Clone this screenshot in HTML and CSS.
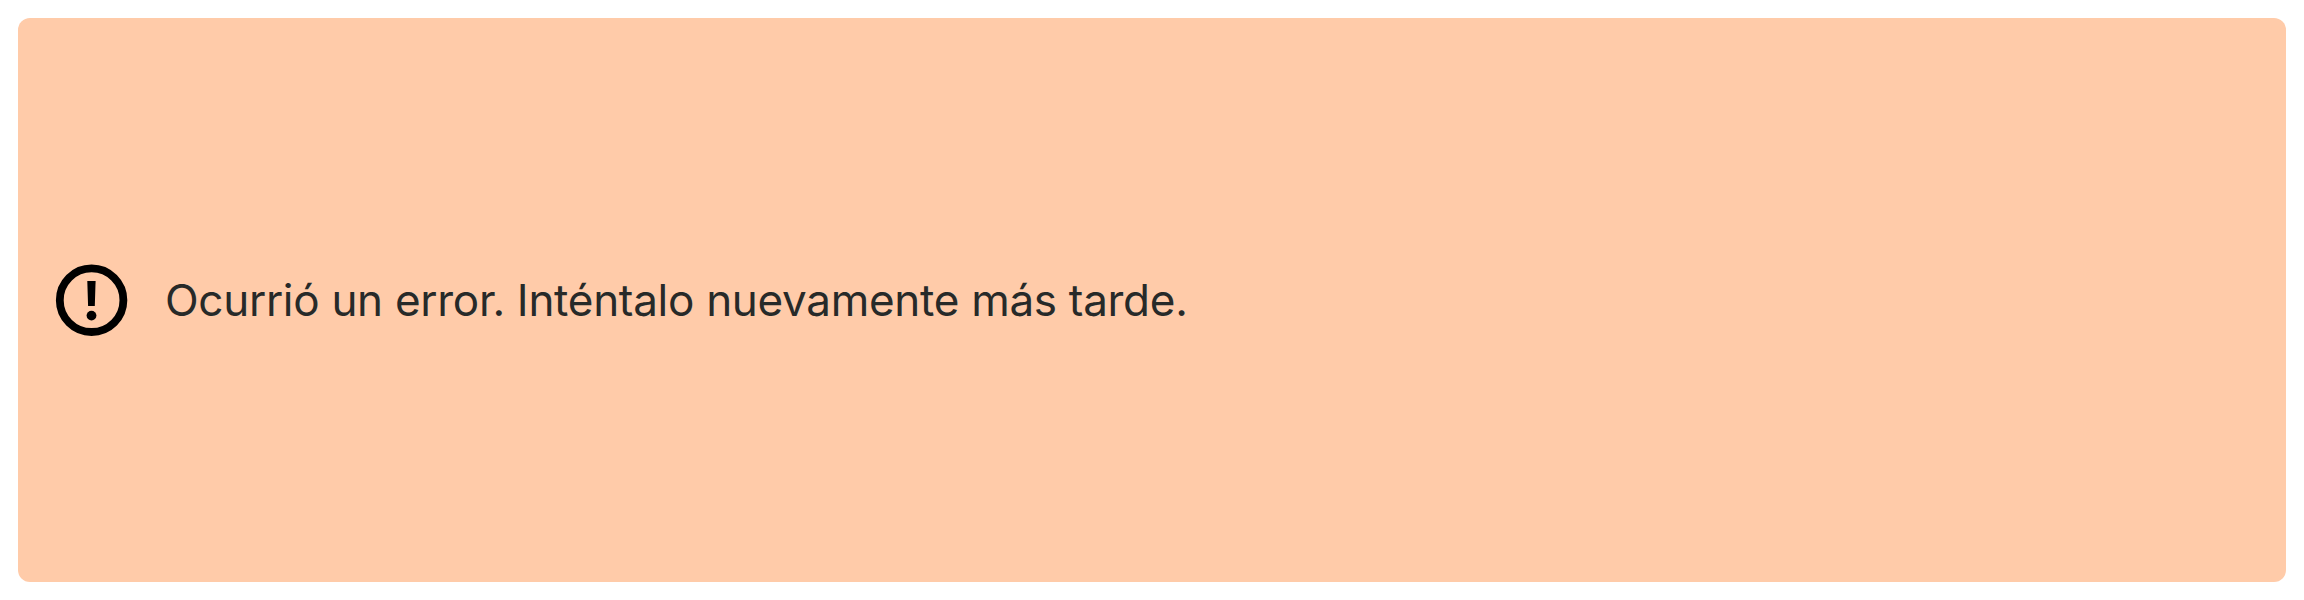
FILE: index.html
```html
<!DOCTYPE html>
<html lang="es">
<head>
<meta charset="utf-8">
<title>Error</title>
<link rel="stylesheet" href="styles.css">
</head>
<body>
<div class="alert" role="alert">
<svg class="alert-icon" viewBox="0 0 73 72" aria-hidden="true">
<circle cx="36.6" cy="36.2" r="31.8" fill="none" stroke="#000" stroke-width="7.8"/>
<path d="M32.3 17h8.3l-.8 25h-6.7z"/>
<circle cx="36.5" cy="51.6" r="4.9"/>
</svg>
<p class="alert-text">Ocurrió un error. Inténtalo nuevamente más tarde.</p>
</div>
</body>
</html>
```
FILE: styles.css
```css
body {
  box-sizing: border-box;
  height: 600px;
  margin: 0;
  padding: 18px;
  background: #fff;
}

.alert {
  box-sizing: border-box;
  display: flex;
  align-items: center;
  gap: 37px;
  height: 564px;
  padding: 0 37px;
  border-radius: 12px;
  background: #ffcba9;
}

.alert-icon {
  flex: none;
  width: 73px;
  height: 72px;
}

.alert-text {
  margin: 0;
  color: #272a29;
  font: 400 44px/66px Inter, "Liberation Sans", sans-serif;
  letter-spacing: -0.29px;
  white-space: nowrap;
}
```
